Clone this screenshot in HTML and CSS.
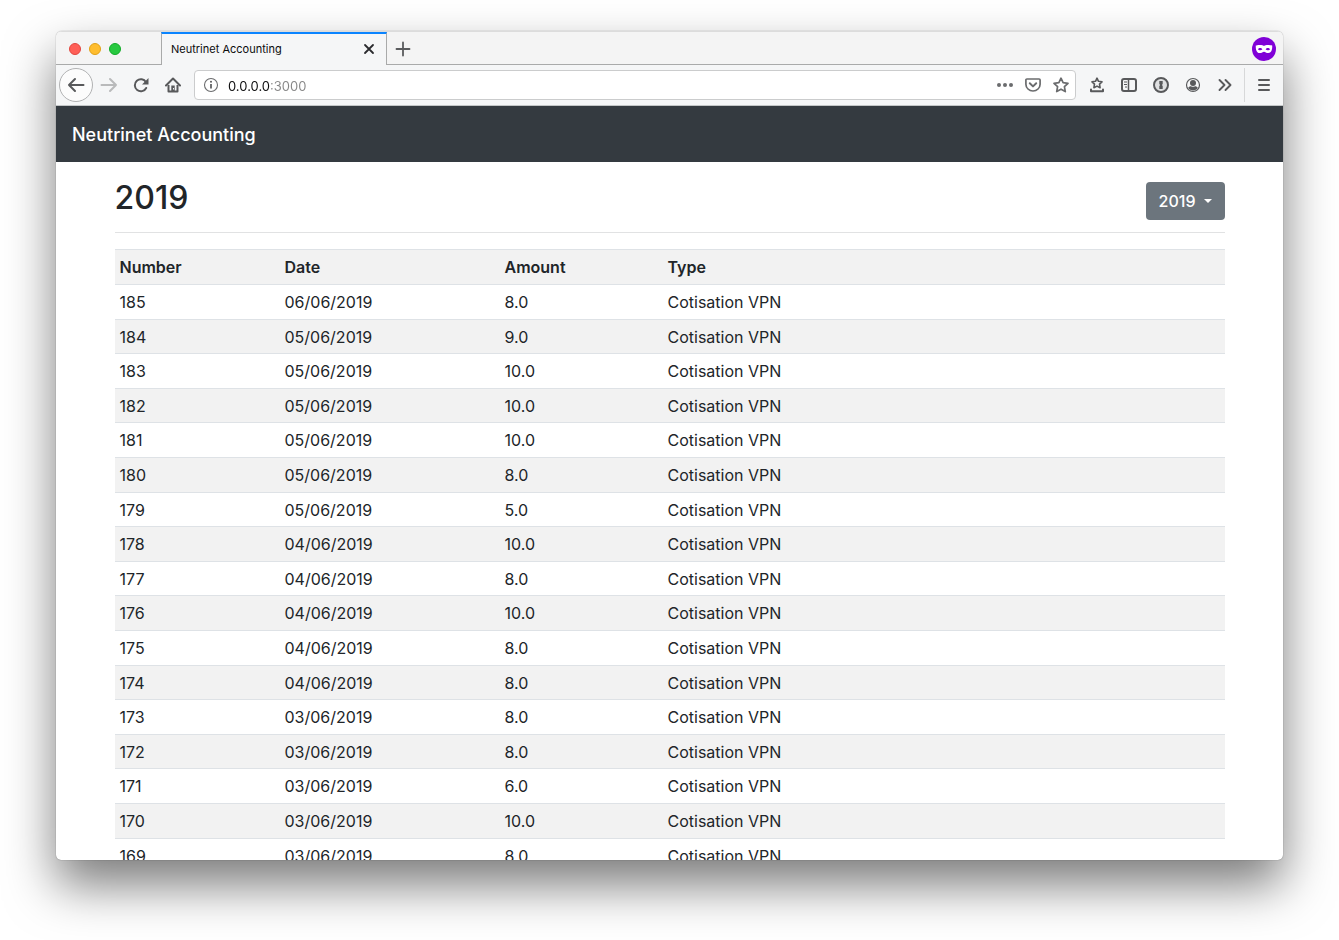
FILE: index.html
```html
<!DOCTYPE html>
<html lang="en">
<head>
<meta charset="utf-8">
<title>Neutrinet Accounting</title>
<link rel="stylesheet" href="styles.css">
</head>
<body>
<div class="window">
  <div class="tabbar">
    <div class="lights">
      <button class="light light-close" aria-label="Close window"></button>
      <button class="light light-min" aria-label="Minimise window"></button>
      <button class="light light-max" aria-label="Zoom window"></button>
    </div>
    <div class="tab">
      <span class="tab-title">Neutrinet Accounting</span>
      <button class="icon-btn tab-close" aria-label="Close tab"><svg width="12" height="12" viewBox="0 0 12 12"><path d="M2 2l8 8M10 2l-8 8" fill="none" stroke="#2a2a2e" stroke-width="1.8" stroke-linecap="round"/></svg></button>
    </div>
    <div class="tab-rest">
      <button class="icon-btn" aria-label="New tab"><svg width="16" height="16" viewBox="0 0 16 16"><path d="M8 1.5v13M1.5 8h13" fill="none" stroke="#5a5b5d" stroke-width="1.8" stroke-linecap="round"/></svg></button>
      <svg class="mask" width="24" height="24" viewBox="0 0 24 24" role="img" aria-label="Private window"><circle cx="12" cy="12" r="12" fill="#8000d7"/><path d="M12 9c1.200-.9 2.600-1.200 4.500-1.100 1.700.1 3 .4 3.700.7.3 3.800-1 7.500-4 7.500-2 0-2.900-1.400-4.200-1.400s-2.200 1.400-4.200 1.400c-3 0-4.300-3.700-4-7.500.700-.3 2-.6 3.700-.7 1.900-.1 3.300.2 4.500 1.100z" fill="#fff"/><path d="M6 12.200c.8-1.700 3.400-1.700 4.400.1-1 1.300-3.500 1.400-4.400-.1zM18 12.200c-.8-1.700-3.400-1.700-4.400.1 1 1.300 3.500 1.400 4.400-.1z" fill="#8000d7"/></svg>
    </div>
  </div>

  <div class="toolbar">
    <button class="icon-btn back" aria-label="Back"><svg width="18" height="16" viewBox="0 0 18 16"><path d="M16.500 8H2M8 2L2 8l6 6" fill="none" stroke="#58595b" stroke-width="2" stroke-linecap="round" stroke-linejoin="round"/></svg></button>
    <button class="icon-btn" aria-label="Forward"><svg width="18" height="16" viewBox="0 0 18 16"><path d="M1.500 8H16M10 2l6 6-6 6" fill="none" stroke="#b9babb" stroke-width="2" stroke-linecap="round" stroke-linejoin="round"/></svg></button>
    <button class="icon-btn" aria-label="Reload"><svg width="16" height="16" viewBox="0 0 16 16"><path d="M13 5.200A6 6 0 1 0 13.200 11" fill="none" stroke="#58595b" stroke-width="2" stroke-linecap="round"/><path d="M15.500 1v6.500H9z" fill="#58595b"/></svg></button>
    <button class="icon-btn" aria-label="Home"><svg width="16" height="16" viewBox="0 0 16 16"><path d="M1 8.500l7-7 7 7" fill="none" stroke="#58595b" stroke-width="2" stroke-linecap="round" stroke-linejoin="round"/><path d="M3.500 8v6.500h9V8" fill="none" stroke="#58595b" stroke-width="2" stroke-linejoin="round"/><path d="M6.300 8.500h3.400V15H6.300z" fill="#58595b"/><path d="M8 11h1v1.500H8z" fill="#f5f6f7"/></svg></button>
    <div class="urlbar">
      <svg width="16" height="16" viewBox="0 0 16 16" aria-hidden="true"><circle cx="8" cy="8" r="6.500" fill="none" stroke="#6b6c6e" stroke-width="1.100"/><path d="M8 7v4.500" stroke="#58595b" stroke-width="1.700"/><circle cx="8" cy="4.700" r="1" fill="#58595b"/></svg>
      <input class="url" type="text" aria-label="Address" value="0.0.0.0:3000">
      <button class="icon-btn url-btn" aria-label="Page actions"><svg width="16" height="16" viewBox="0 0 16 16"><g fill="#6b6c6e"><circle cx="2" cy="8" r="2"/><circle cx="8" cy="8" r="2"/><circle cx="14" cy="8" r="2"/></g></svg></button>
      <button class="icon-btn url-btn" aria-label="Save to Pocket"><svg width="16" height="16" viewBox="0 0 16 16"><path d="M1.900 2h12.200a1 1 0 0 1 1 1v4.200a7.100 6.800 0 0 1-14.200 0V3a1 1 0 0 1 1-1z" fill="none" stroke="#6b6c6e" stroke-width="1.700"/><path d="M4.800 6.300L8 9.400l3.200-3.100" fill="none" stroke="#6b6c6e" stroke-width="2" stroke-linecap="round" stroke-linejoin="round"/></svg></button>
      <button class="icon-btn url-btn" aria-label="Bookmark this page"><svg width="16" height="16" viewBox="0 0 16 16"><path d="M8 1.200l2.100 4.500 4.900.6-3.600 3.400.9 4.900L8 12.200l-4.300 2.400.9-4.900L1 6.300l4.900-.6z" fill="none" stroke="#6b6c6e" stroke-width="1.700" stroke-linejoin="round"/></svg></button>
    </div>
    <button class="icon-btn" aria-label="Bookmarks menu"><svg width="16" height="16" viewBox="0 0 16 16"><path d="M8 1.200l1.500 3.100 3.500.5-2.500 2.400.6 3.500L8 9.100l-3.100 1.600.6-3.500L3 4.800l3.500-.5z" fill="none" stroke="#58595b" stroke-width="1.600" stroke-linejoin="round"/><path d="M2 12.500v1.700h12v-1.700" fill="none" stroke="#58595b" stroke-width="2" stroke-linecap="round" stroke-linejoin="round"/></svg></button>
    <button class="icon-btn" aria-label="Sidebars"><svg width="16" height="16" viewBox="0 0 16 16"><rect x="1" y="2" width="14" height="12" rx="2" fill="none" stroke="#58595b" stroke-width="2"/><path d="M7.500 2v12" stroke="#58595b" stroke-width="1.500"/><path d="M3 5h3M3 7.500h3M4 10h2" stroke="#58595b" stroke-width="1"/></svg></button>
    <button class="icon-btn" aria-label="Password manager"><svg width="16" height="16" viewBox="0 0 16 16"><circle cx="8" cy="8" r="7" fill="#dfe0e1" stroke="#58595b" stroke-width="2"/><path d="M6.300 4h3.400v3l-.8 1 .8 1v3H6.300V9l.8-1-.8-1z" fill="#58595b"/></svg></button>
    <button class="icon-btn" aria-label="Account"><svg width="16" height="16" viewBox="0 0 16 16"><circle cx="8" cy="8" r="6.500" fill="none" stroke="#58595b" stroke-width="1.200"/><circle cx="8" cy="6" r="3" fill="#58595b"/><path d="M3.200 10.800c.9-1.300 2.100-1.600 2.800-1.600 1.200.8 2.800.8 4 0 .7 0 1.900.3 2.800 1.600A5.600 5.600 0 0 1 3.200 10.800z" fill="#58595b"/></svg></button>
    <button class="icon-btn" aria-label="More tools"><svg width="16" height="16" viewBox="0 0 16 16"><path d="M2.500 3l5 5-5 5M8.500 3l5 5-5 5" fill="none" stroke="#58595b" stroke-width="1.900" stroke-linecap="round" stroke-linejoin="round"/></svg></button>
    <span class="divider"></span>
    <button class="icon-btn" aria-label="Open menu"><svg width="16" height="16" viewBox="0 0 16 16"><path d="M3 3h10M3 8h10M3 13h10" stroke="#58595b" stroke-width="2" stroke-linecap="round"/></svg></button>
  </div>

  <div class="page">
    <nav class="navbar"><a class="brand" href="#">Neutrinet Accounting</a></nav>
    <main class="container">
      <header class="heading">
        <h2 class="year">2019</h2>
        <button class="dropdown" aria-haspopup="true">2019<span class="caret"></span></button>
      </header>
      <table class="entries">
        <thead>
          <tr><th class="col-number" scope="col">Number</th><th class="col-date" scope="col">Date</th><th class="col-amount" scope="col">Amount</th><th scope="col">Type</th></tr>
        </thead>
        <tbody>
          <tr><td>185</td><td>06/06/2019</td><td>8.0</td><td>Cotisation VPN</td></tr>
          <tr><td>184</td><td>05/06/2019</td><td>9.0</td><td>Cotisation VPN</td></tr>
          <tr><td>183</td><td>05/06/2019</td><td>10.0</td><td>Cotisation VPN</td></tr>
          <tr><td>182</td><td>05/06/2019</td><td>10.0</td><td>Cotisation VPN</td></tr>
          <tr><td>181</td><td>05/06/2019</td><td>10.0</td><td>Cotisation VPN</td></tr>
          <tr><td>180</td><td>05/06/2019</td><td>8.0</td><td>Cotisation VPN</td></tr>
          <tr><td>179</td><td>05/06/2019</td><td>5.0</td><td>Cotisation VPN</td></tr>
          <tr><td>178</td><td>04/06/2019</td><td>10.0</td><td>Cotisation VPN</td></tr>
          <tr><td>177</td><td>04/06/2019</td><td>8.0</td><td>Cotisation VPN</td></tr>
          <tr><td>176</td><td>04/06/2019</td><td>10.0</td><td>Cotisation VPN</td></tr>
          <tr><td>175</td><td>04/06/2019</td><td>8.0</td><td>Cotisation VPN</td></tr>
          <tr><td>174</td><td>04/06/2019</td><td>8.0</td><td>Cotisation VPN</td></tr>
          <tr><td>173</td><td>03/06/2019</td><td>8.0</td><td>Cotisation VPN</td></tr>
          <tr><td>172</td><td>03/06/2019</td><td>8.0</td><td>Cotisation VPN</td></tr>
          <tr><td>171</td><td>03/06/2019</td><td>6.0</td><td>Cotisation VPN</td></tr>
          <tr><td>170</td><td>03/06/2019</td><td>10.0</td><td>Cotisation VPN</td></tr>
          <tr><td>169</td><td>03/06/2019</td><td>8.0</td><td>Cotisation VPN</td></tr>
        </tbody>
      </table>
    </main>
  </div>
</div>
</body>
</html>
```

FILE: styles.css
```css
* {
  box-sizing: border-box;
}

body {
  margin: 0;
  height: 100vh;
  padding: 31px 56px 80px;
  display: flex;
  overflow: hidden;
  background: #fff;
  color: #212529;
  font: 16px/24px Inter, "Liberation Sans", sans-serif;
}

button {
  padding: 0;
  border: 0;
  background: none;
  color: inherit;
  font: inherit;
}

svg {
  display: block;
  flex: none;
}

.window {
  flex: 1;
  min-width: 0;
  display: flex;
  flex-direction: column;
  overflow: hidden;
  border-radius: 6px 6px 5px 5px;
  background: #fff;
  box-shadow: 0 0 1px rgba(0, 0, 0, 0.6), 0 25px 50px rgba(0, 0, 0, 0.52);
}

/* Tab strip */
.tabbar {
  display: flex;
  flex: none;
  height: 34px;
  border-top: 1px solid #dcdcdc;
  background: #f4f4f4;
}

.lights {
  display: flex;
  align-items: center;
  gap: 8px;
  width: 105px;
  padding: 2px 0 0 13px;
  border-bottom: 1px solid #a9aaaa;
}

.light {
  width: 12px;
  height: 12px;
  border: 1px solid;
  border-radius: 50%;
}

.light-close {
  background: #ff5f57;
  border-color: #e2463f;
}

.light-min {
  background: #ffbd2e;
  border-color: #e1a116;
}

.light-max {
  background: #28c940;
  border-color: #12ac28;
}

.tab {
  display: flex;
  align-items: center;
  justify-content: space-between;
  width: 226px;
  padding: 0 11px 2px 9px;
  border: solid #a9aaaa;
  border-width: 0 1px;
  border-top: 2px solid #0a84ff;
  background: #f5f6f7;
}

.tab-title {
  color: #0c0c0d;
  font-size: 11px;
  line-height: 16px;
}

.tab-rest {
  display: flex;
  align-items: center;
  justify-content: space-between;
  flex: 1;
  padding: 2px 7px 0 0;
  border-bottom: 1px solid #a9aaaa;
}

/* Toolbar */
.icon-btn {
  display: flex;
  align-items: center;
  justify-content: center;
  flex: none;
  width: 32px;
  height: 30px;
}

.tab-close {
  width: 12px;
  height: 16px;
}

.toolbar {
  display: flex;
  align-items: center;
  flex: none;
  height: 41px;
  padding: 0 3px;
  border-bottom: 1px solid #c3c6c7;
  background: #f5f6f7;
}

.back {
  width: 34px;
  height: 34px;
  border: 1px solid #b1b2b3;
  border-radius: 50%;
  background: #fcfcfc;
}

.urlbar {
  display: flex;
  align-items: center;
  flex: 1;
  min-width: 0;
  height: 30px;
  margin: 0 5px;
  padding-left: 8px;
  border: 1px solid #cbcccd;
  border-radius: 4px;
  background: #fff;
}

/* Host in black, port in grey */
.url {
  flex: 1;
  min-width: 0;
  height: 26px;
  margin-left: 9px;
  padding: 2px 0 0;
  border: 0;
  outline: 0;
  background: linear-gradient(to right, #0c0c0d 42px, #858585 42px);
  background-clip: text;
  -webkit-background-clip: text;
  color: transparent;
  font: 13px/24px Inter, "Liberation Sans", sans-serif;
}

.url-btn {
  width: 28px;
  height: 28px;
}

.divider {
  width: 1px;
  height: 34px;
  margin: 0 3px;
  background: #d7d8d9;
}

/* Page */
.page {
  flex: 1;
  min-height: 0;
  overflow: hidden;
}

.navbar {
  display: flex;
  align-items: center;
  height: 56px;
  padding: 2px 16px 0;
  background: #343a40;
}

.brand {
  color: #fff;
  font-size: 18px;
  line-height: 30px;
  font-weight: 500;
  text-decoration: none;
}

.container {
  max-width: 1140px;
  margin: 0 auto;
  padding: 16px 15px;
}

.heading {
  display: flex;
  align-items: flex-start;
  justify-content: space-between;
  margin-bottom: 16px;
  padding-bottom: 12px;
  border-bottom: 1px solid #e1e2e3;
}

.year {
  margin: 0;
  font-size: 32px;
  line-height: 40px;
  font-weight: 500;
}

.dropdown {
  display: flex;
  align-items: center;
  gap: 8px;
  height: 38px;
  margin-top: 4px;
  padding: 0 13px;
  border-radius: 4px;
  background: #6c757d;
  color: #fff;
  font-weight: 500;
}

.caret {
  border: solid transparent;
  border-width: 4px 4px 0;
  border-top-color: #fff;
}

.entries {
  width: 100%;
  border-spacing: 0;
  table-layout: fixed;
}

.entries th,
.entries td {
  padding: 5px;
  border-top: 1px solid #dee2e6;
  text-align: left;
}

.entries th {
  background: #f2f2f2;
  font-weight: 600;
}

.entries tbody tr:nth-child(even) {
  background: #f2f2f2;
}

/* Two rows in five are a pixel shorter, an average pitch between 34 and 35 */
.entries tbody tr:nth-child(5n + 2) td,
.entries tbody tr:nth-child(5n + 4) td {
  padding-bottom: 4px;
}

.col-number {
  width: 165px;
}

.col-date {
  width: 220px;
}

.col-amount {
  width: 163px;
}
```
